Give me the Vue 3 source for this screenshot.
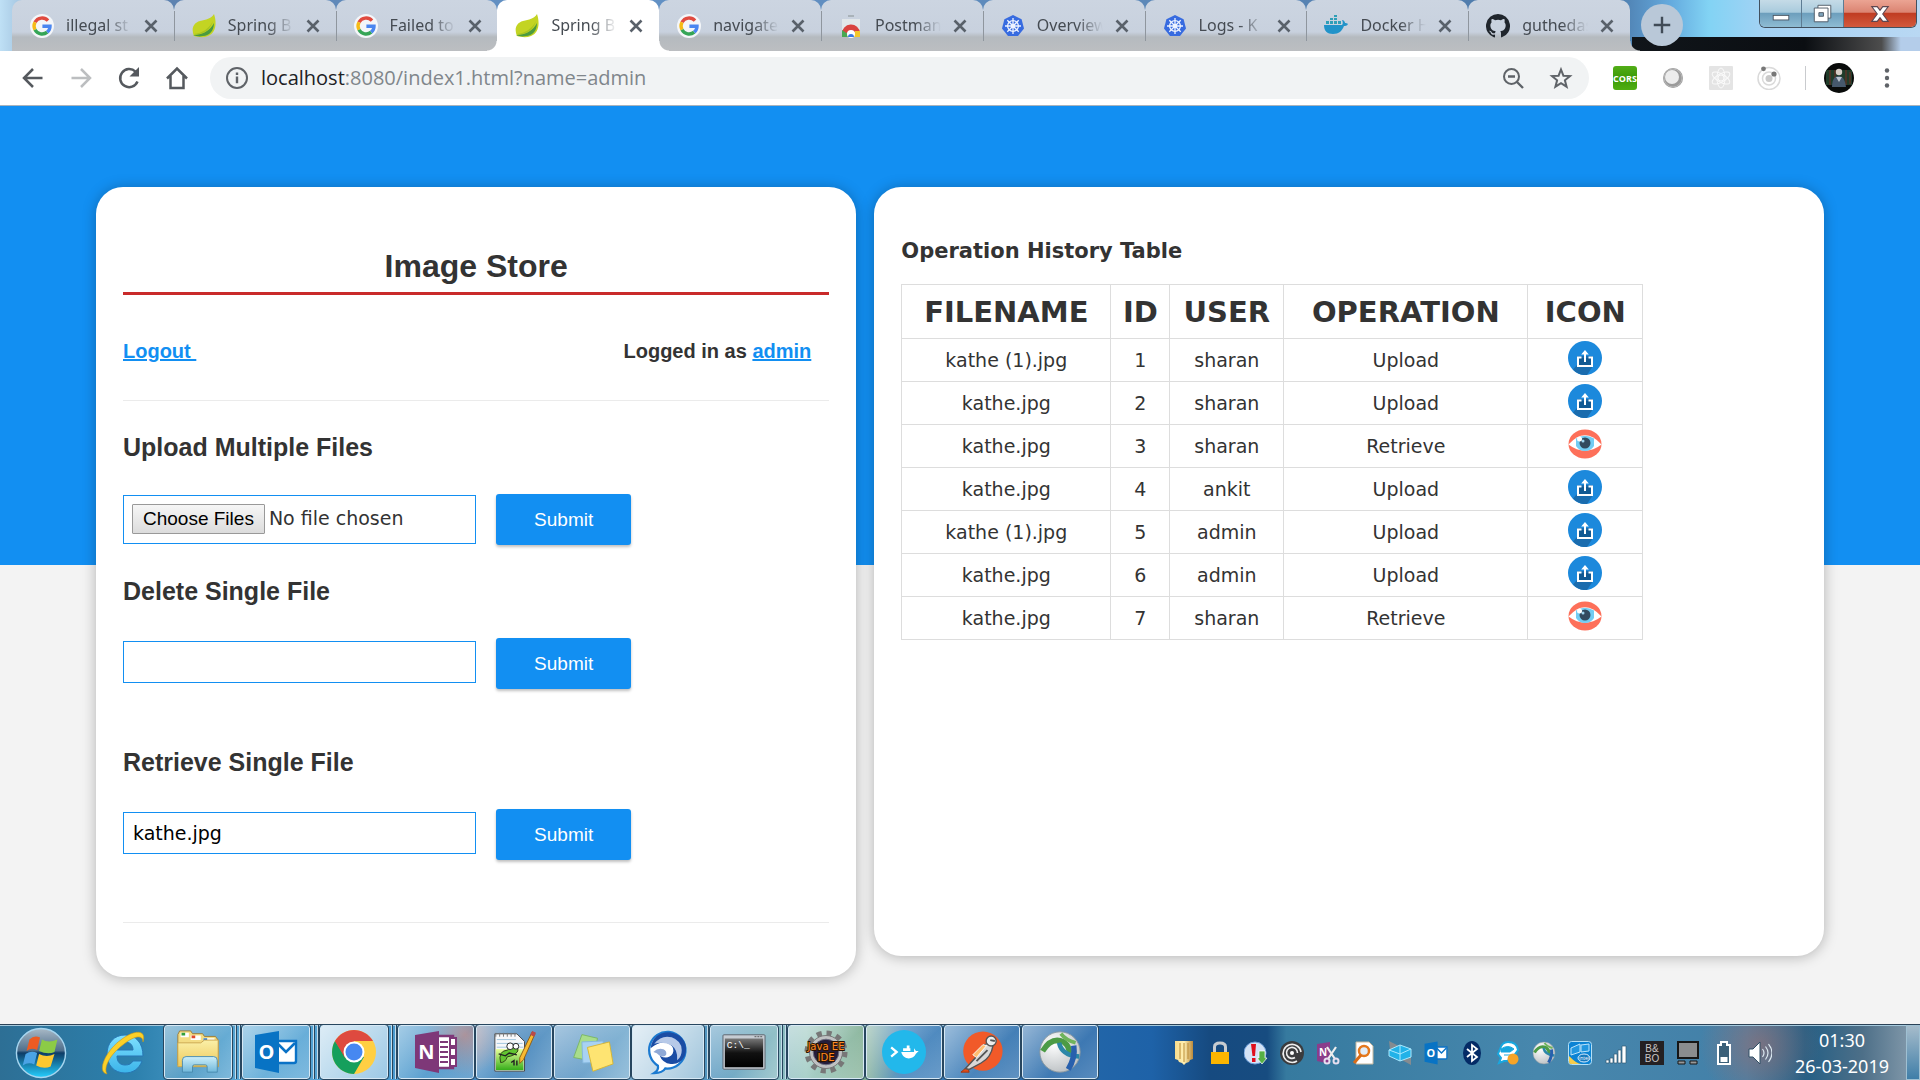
<script setup>
import { ref } from 'vue'

const tabs = [
  { icon: 'google', title: 'illegal st' },
  { icon: 'leaf', title: 'Spring B' },
  { icon: 'google', title: 'Failed to' },
  { icon: 'leaf', title: 'Spring B', active: true },
  { icon: 'google', title: 'navigate' },
  { icon: 'webstore', title: 'Postman' },
  { icon: 'helm', title: 'Overview' },
  { icon: 'helm', title: 'Logs - K' },
  { icon: 'docker', title: 'Docker H' },
  { icon: 'github', title: 'guthedas' },
]

const navButtons = [
  { icon: 'back', label: 'Back' },
  { icon: 'forward', label: 'Forward' },
  { icon: 'reload', label: 'Reload' },
  { icon: 'home', label: 'Home' },
]

const extensions = [
  { icon: 'cors', label: 'CORS' },
  { icon: 'ring', label: 'Ring' },
  { icon: 'atom', label: 'React tools' },
  { icon: 'orbit', label: 'Orbit' },
]

const history = [
  { id: 1, file: 'kathe (1).jpg', user: 'sharan', op: 'Upload' },
  { id: 2, file: 'kathe.jpg', user: 'sharan', op: 'Upload' },
  { id: 3, file: 'kathe.jpg', user: 'sharan', op: 'Retrieve' },
  { id: 4, file: 'kathe.jpg', user: 'ankit', op: 'Upload' },
  { id: 5, file: 'kathe (1).jpg', user: 'admin', op: 'Upload' },
  { id: 6, file: 'kathe.jpg', user: 'admin', op: 'Upload' },
  { id: 7, file: 'kathe.jpg', user: 'sharan', op: 'Retrieve' },
]

const apps = [
  { icon: 'folder', label: 'Explorer', stack: 2 },
  { icon: 'outlook', label: 'Outlook', stack: 2 },
  { icon: 'chrome', label: 'Chrome', stack: 2, lit: true },
  { icon: 'onenote', label: 'OneNote' },
  { icon: 'notepad', label: 'Notepad++' },
  { icon: 'sticky', label: 'Sticky Notes' },
  { icon: 'jabber', label: 'Jabber', stack: 1, lit: true },
  { icon: 'cmd', label: 'Command Prompt', stack: 2 },
  { icon: 'eclipse', label: 'Eclipse' },
  { icon: 'kitematic', label: 'Docker' },
  { icon: 'postman', label: 'Postman' },
  { icon: 'anyconnect', label: 'AnyConnect' },
]

const tray = [
  'shield', 'lock', 'alert', 'spiral', 'clipper', 'search-doc', 'cube', 'outlook', 'bluetooth',
  'chat', 'anyconnect', 'intel', 'signal', 'bando', 'display', 'battery', 'speaker',
]

const deleteName = ref('')
const retrieveName = ref('kathe.jpg')
</script>

<template>
  <div class="screen">
    <svg class="sprite" aria-hidden="true">
      <defs>
        <linearGradient id="g-orb" x1="0" y1="0" x2="0" y2="1"><stop offset="0" stop-color="#a9b9c6" /><stop offset=".45" stop-color="#4f6f8c" /><stop offset=".5" stop-color="#0d3c66" /><stop offset="1" stop-color="#25d0ff" /></linearGradient>
        <linearGradient id="g-ie" x1="0" y1="0" x2="0" y2="1"><stop offset="0" stop-color="#7fe0ff" /><stop offset="1" stop-color="#3bb4ea" /></linearGradient>
        <linearGradient id="g-folder" x1="0" y1="0" x2="0" y2="1"><stop offset="0" stop-color="#fbf0a8" /><stop offset="1" stop-color="#edc95b" /></linearGradient>
        <linearGradient id="g-glass" x1="0" y1="0" x2="0" y2="1"><stop offset="0" stop-color="#cdeffa" /><stop offset="1" stop-color="#6fb7da" /></linearGradient>
        <linearGradient id="g-cmd" x1="0" y1="0" x2="0" y2="1"><stop offset="0" stop-color="#777" /><stop offset=".5" stop-color="#111" /><stop offset="1" stop-color="#000" /></linearGradient>
        <linearGradient id="g-green" x1="0" y1="0" x2="0" y2="1"><stop offset="0" stop-color="#e9ff9a" /><stop offset="1" stop-color="#35ad1a" /></linearGradient>
        <linearGradient id="g-cors" x1="0" y1="0" x2="0" y2="1"><stop offset="0" stop-color="#52ad18" /><stop offset=".5" stop-color="#3b9a07" /><stop offset="1" stop-color="#4fae12" /></linearGradient>
        <linearGradient id="g-gold" x1="0" y1="0" x2="1" y2="0"><stop offset="0" stop-color="#f8dc8c" /><stop offset=".5" stop-color="#fff0b4" /><stop offset="1" stop-color="#b9893b" /></linearGradient>
        <radialGradient id="g-ball" cx=".35" cy=".3" r=".8"><stop offset="0" stop-color="#fff" /><stop offset="1" stop-color="#b8bdc0" /></radialGradient>
      </defs>

      <symbol id="google" viewBox="0 0 24 24">
        <circle cx="12" cy="12" r="12" fill="#f4f6f9" />
        <g fill="none" stroke-width="3.4">
          <path d="M18 6.6A8 8 0 0 0 5 8.3" stroke="#e04a3f" />
          <path d="M5 8.3a8 8 0 0 0 0 7.4" stroke="#f6bb16" />
          <path d="M5 15.7a8 8 0 0 0 12.2 2.4" stroke="#35a556" />
          <path d="M17.2 18.1A7.5 7.5 0 0 0 20 12.2h-7.6" stroke="#4a86f0" />
        </g>
      </symbol>
      <symbol id="leaf" viewBox="0 0 24 24">
        <path d="M22 0c3 9 2 19-6 22-5 2-10 1-14 0C-1 15 1 9 8 7c6-1.600 11-2 14-7z" fill="#c3d423" />
        <path d="M1 21c9 0 17-4 21-12 0 8-5 13-11 13-4 1-7 0-10-1z" fill="#4b9b3f" />
        <path d="M2 20c8-1 15-5 19-13-3 9-9 14-19 13z" fill="#a9c51f" />
      </symbol>
      <symbol id="webstore" viewBox="0 0 24 24">
        <path d="M9 1h6v2H9zM3 5h18v18H3z" fill="#e2e7ea" /><path d="M9 1h6v2H9z" fill="#a9b2b9" />
        <path d="M3 20a9 9 0 0 1 18-1l-9-1z" fill="#d9433f" />
        <path d="M3 23v-7l6 4 1 3z" fill="#48a852" /><path d="M14 23l2-6h5v6z" fill="#f4c72c" />
        <circle cx="12" cy="20" r="4" fill="#fff" /><path d="M9 23a3 3 0 1 1 6 0z" fill="#3b78e7" />
      </symbol>
      <symbol id="helm" viewBox="0 0 24 24">
        <path d="M12 1l8.600 4.200L23 14.500 17 22H7L1 14.500l2.400-9.300z" fill="#376be0" />
        <g fill="none" stroke="#eef3ff" stroke-width="1.300"><circle cx="12" cy="12" r="5.400" /><circle cx="12" cy="12" r="1.500" />
          <path d="M12 4v16M4 12h16M6.300 6.300l11.400 11.400M17.700 6.300L6.300 17.700" /></g>
      </symbol>
      <symbol id="docker" viewBox="0 0 24 24">
        <path d="M0 11h18c1-1 1-3 0-5 2 0 3 2 3 3 1 0 2 0 3 1-1 2-3 2-4 2-2 5-5 8-11 8-6 0-9-3-9-9z" fill="#2193c9" />
        <path d="M2 7h3v3H2zM6 7h3v3H6zM10 7h3v3h-3zM14 7h3v3h-3zM6 4h3v2H6zM10 4h3v2h-3zM10 1h3v2h-3z" fill="#2f9fb8" />
      </symbol>
      <symbol id="github" viewBox="0 0 16 16">
        <path fill="#20262d" d="M8 0a8 8 0 0 0-2.530 15.590c.4.070.55-.17.55-.38v-1.490C4 14.160 3.480 13.220 3.320 12.770c-.09-.23-.48-.94-.82-1.130-.28-.15-.68-.52-.01-.53.63-.01 1.080.58 1.230.82.72 1.210 1.870.87 2.330.66.070-.52.280-.87.510-1.070-1.780-.2-3.640-.89-3.640-3.950 0-.87.310-1.590.820-2.150-.08-.2-.36-1.020.080-2.120 0 0 .670-.21 2.200.82a7.400 7.400 0 0 1 4 0c1.530-1.040 2.200-.82 2.200-.82.440 1.100.160 1.920.080 2.120.510.560.820 1.270.820 2.150 0 3.070-1.870 3.750-3.650 3.950.290.250.540.730.540 1.480v2.200c0 .210.150.460.550.380A8 8 0 0 0 8 0z" />
      </symbol>
      <symbol id="close" viewBox="0 0 24 24"><path d="M6.500 6.500l11 11m0-11l-11 11" stroke="currentColor" stroke-width="2.600" /></symbol>
      <symbol id="plus" viewBox="0 0 24 24"><path d="M12 3v18M3 12h18" stroke="currentColor" stroke-width="2.600" /></symbol>

      <symbol id="back" viewBox="0 0 24 24"><path d="M21.500 12H4M12 3l-9 9 9 9" fill="none" stroke="#55595e" stroke-width="2.500" /></symbol>
      <symbol id="forward" viewBox="0 0 24 24"><path d="M2.500 12H20M12 3l9 9-9 9" fill="none" stroke="#bcbec0" stroke-width="2.500" /></symbol>
      <symbol id="reload" viewBox="0 0 24 24"><path d="M20.500 15.500A9 9 0 1 1 18.500 5.700" fill="none" stroke="#55595e" stroke-width="2.500" /><path d="M22 1v9.500h-9.500z" fill="#55595e" /></symbol>
      <symbol id="home" viewBox="0 0 24 24"><path d="M2 12.500L12 2.500l10 10M5.500 10v12h13V10" fill="none" stroke="#55595e" stroke-width="2.500" /></symbol>
      <symbol id="info" viewBox="0 0 24 24"><circle cx="12" cy="12" r="10" fill="none" stroke="#5f6368" stroke-width="2" /><path d="M10.800 10.500h2.400v6.800h-2.400zM10.800 6.500h2.400v2.400h-2.400z" fill="#5f6368" /></symbol>
      <symbol id="zoomout" viewBox="0 0 24 24"><circle cx="10.500" cy="10.500" r="7.500" fill="none" stroke="#5f6368" stroke-width="2" /><path d="M7 10.500h7M16 16l6 6" stroke="#5f6368" stroke-width="2.400" /></symbol>
      <symbol id="star" viewBox="0 0 24 24"><path d="M12 3.500l2.400 6.200 6.600.4-5.100 4.200 1.700 6.400L12 17.100l-5.600 3.600 1.700-6.400L3 10.100l6.600-.4z" fill="none" stroke="#5f6368" stroke-width="2" /></symbol>
      <symbol id="cors" viewBox="0 0 24 24"><rect width="24" height="24" rx="3" fill="url(#g-cors)" /><text x="12" y="16" text-anchor="middle" font-family="Open Sans, sans-serif" font-size="9" font-weight="700" fill="#fff">CORS</text></symbol>
      <symbol id="ring" viewBox="0 0 24 24"><circle cx="12" cy="12" r="10" fill="#9b9b9b" /><circle cx="11" cy="11" r="7" fill="#ececec" /><circle cx="12" cy="12" r="9" fill="none" stroke="#b9b9b9" /></symbol>
      <symbol id="atom" viewBox="0 0 24 24"><rect width="24" height="24" rx="1" fill="#e4e4e4" /><g fill="none" stroke="#fafafa" stroke-width="1"><circle cx="12" cy="12" r="3" /><ellipse cx="12" cy="12" rx="4" ry="10" /><ellipse cx="12" cy="12" rx="4" ry="10" transform="rotate(60 12 12)" /><ellipse cx="12" cy="12" rx="4" ry="10" transform="rotate(120 12 12)" /></g></symbol>
      <symbol id="orbit" viewBox="0 0 24 24"><g fill="none" stroke="#dadada" stroke-width="1.500"><circle cx="12" cy="12.500" r="11" /><circle cx="12" cy="12.500" r="6.500" /></g><circle cx="12" cy="12.500" r="3.500" fill="#c9c9c9" /><circle cx="6.500" cy="2.800" r="2.400" fill="#777" /><circle cx="17" cy="8" r="2.600" fill="#777" /></symbol>
      <symbol id="avatar" viewBox="0 0 30 30"><circle cx="15" cy="15" r="15" fill="#090b0a" /><path d="M2 7h26v15H2z" fill="#203c2a" /><path d="M6 7v15M11 7v15M22 7v15M26 9v12" stroke="#4a3426" stroke-width="2" /><circle cx="15" cy="9" r="3.200" fill="#d5cdc5" /><path d="M8 24c0-8 3-11 7-11s6 4 7 11z" fill="#46586c" /><path d="M12 14l3 5 3-5" fill="#b9c2cc" /></symbol>
      <symbol id="dots" viewBox="0 0 24 24"><g fill="#5f6368"><circle cx="12" cy="4.500" r="2.200" /><circle cx="12" cy="12" r="2.200" /><circle cx="12" cy="19.500" r="2.200" /></g></symbol>
      <symbol id="win-min" viewBox="0 0 24 24"><rect x="3.500" y="13.500" width="17" height="5" fill="#fff" stroke="#4b5663" /></symbol>
      <symbol id="win-max" viewBox="0 0 24 24"><path d="M6.500 2.500h14v14h-14z" fill="#fff" stroke="#4b5663" /><path d="M2.500 5.500h15v15h-15z" fill="#fff" stroke="#4b5663" /><path d="M7.500 10.500h5v4h-5z" fill="#7fa5bd" stroke="#4b5663" /></symbol>
      <symbol id="win-close" viewBox="0 0 24 24"><path d="M3 4h6l3 4 3-4h6l-6 8 6 8h-6l-3-4-3 4H3l6-8z" fill="#fff" stroke="#5d4650" stroke-width="1.200" /></symbol>

      <symbol id="upload" viewBox="0 0 34 34">
        <circle cx="17" cy="17" r="17" fill="#1c89dc" />
        <path d="M9 15v9l-4 4.500A17 17 0 0 0 19 34l6-9V15z" fill="#1a6cae" />
        <path d="M11 17h12v7H11z" fill="#125a93" />
        <path d="M13.500 16.500H10V25h14v-8.500h-3.500" fill="none" stroke="#fff" stroke-width="2" />
        <path d="M17 21v-9" stroke="#fff" stroke-width="2" /><path d="M17 9l3.800 4.500h-7.600z" fill="#fff" />
      </symbol>
      <symbol id="eye" viewBox="0 0 34 34">
        <ellipse cx="17" cy="17" rx="16.500" ry="14.500" fill="#fd705a" />
        <path d="M.5 17.500Q17-1 33.500 17.500 17 30 .5 17.500z" fill="#fff" />
        <path d="M8 11.500Q17 6 26 11.500V19q-3 5-9 5t-9-5z" fill="#73cdf3" />
        <circle cx="17" cy="16" r="5.500" fill="#324a5e" /><circle cx="15" cy="14" r="1.500" fill="#9ed4ee" /><circle cx="11.500" cy="12" r="2.500" fill="#fff" />
      </symbol>

      <symbol id="orb" viewBox="0 0 54 54">
        <circle cx="27" cy="27" r="25.500" fill="url(#g-orb)" stroke="#a6d5ef" stroke-width="1.500" />
        <path d="M15 13q5-5 11-2l-3 13q-6-3-11 1z" fill="#ec5b22" /><path d="M28 13q7 4 16 0l-3 13q-7 3-16-1z" fill="#8ccb46" />
        <path d="M11 28q6-4 12-1l-3 12q-6-3-12 1z" fill="#4aa3e5" /><path d="M25 28q8 4 16 0l-4 13q-7 3-15-1z" fill="#fdc830" />
      </symbol>
      <symbol id="ie" viewBox="0 0 46 46">
        <path d="M43 26H17c0 6 3 9 8 9 4 0 6-1 8-4h9c-3 8-9 12-17 12C14 43 7 35 7 24S14 5 25 5s18 8 18 21zM17 20h16c0-5-3-8-8-8s-8 3-8 8z" fill="url(#g-ie)" stroke="#2877b5" />
        <path d="M7 44C-4 42 6 20 22 9 34 0 47-1 43 12c0-8-9-6-19 2C10 24 3 38 7 44z" fill="#fbd028" stroke="#c99716" stroke-width=".6" />
      </symbol>
      <symbol id="folder" viewBox="0 0 48 48">
        <path d="M2 38V5l2-4h12l2 3h11l2 3h12l3 4v29z" fill="#f3dc83" stroke="#9d7a33" /><path d="M5 3h9v5H5zM16 6h11v5H16zM30 9h12v4H30z" fill="#fff" />
        <path d="M6 3h4v3H6z" fill="#33a03c" /><path d="M17 6h4v3h-4z" fill="#de4a2d" /><path d="M30 9h4v3h-4z" fill="#2e7bd1" />
        <path d="M2 14h25l4-3h15v29H2z" fill="url(#g-folder)" stroke="#c9a54f" />
        <path d="M7 46V33q0-4 4-4h30q4 0 4 4v13H34v-6q0-2-2-2H20q-2 0-2 2v6z" fill="url(#g-glass)" stroke="#4789ad" />
      </symbol>
      <symbol id="outlook" viewBox="0 0 44 44">
        <path d="M22 11h20v20q0 2-2 2H22z" fill="#fff" stroke="#0a72c6" stroke-width="2.400" /><path d="M23 13l9 9 9-9" fill="none" stroke="#0a72c6" stroke-width="2.600" />
        <path d="M1 5l24-4v42L1 38z" fill="#0873c4" /><text x="12.500" y="29" text-anchor="middle" font-family="Open Sans, sans-serif" font-size="20" font-weight="700" fill="#fff">O</text>
      </symbol>
      <symbol id="chrome" viewBox="0 0 44 44">
        <circle cx="22" cy="22" r="22" fill="#ffcf43" /><path d="M3 11a22 22 0 0 1 38 0H22L12 28z" fill="#de4a3f" /><path d="M3 11a22 22 0 0 0 19 33l10-17H13z" fill="#159f5c" /><path d="M3 11l10 17 9-17z" fill="#de4a3f" />
        <circle cx="22" cy="22" r="10.500" fill="#fff" /><circle cx="22" cy="22" r="8.500" fill="#4688f1" />
      </symbol>
      <symbol id="onenote" viewBox="0 0 44 44">
        <path d="M23 6h16v32H23z" fill="#fff" stroke="#7e3878" stroke-width="2.400" /><path d="M26 12h8M26 17h8M26 22h8M26 27h8M26 32h8" stroke="#7e3878" stroke-width="2" /><path d="M36 8h6v8h-6zM36 18h6v8h-6zM36 28h6v8h-6z" fill="#fff" stroke="#7e3878" stroke-width="2" />
        <path d="M1 5l24-4v42L1 38z" fill="#7e3878" /><text x="12.500" y="29" text-anchor="middle" font-family="Open Sans, sans-serif" font-size="20" font-weight="700" fill="#fff">N</text>
      </symbol>
      <symbol id="notepad" viewBox="0 0 46 46">
        <path d="M3 4h23l8 8v31H3z" fill="#f7f8fa" stroke="#444" /><path d="M5 10h20M5 14h27M5 18h28" stroke="#9fc4dd" /><path d="M4 20h29v22H4z" fill="url(#g-green)" />
        <path d="M4 3v4M8 3v4M12 3v4M16 3v4M20 3v4M24 3v4" stroke="#777" />
        <path d="M9 34q-3-12 7-13l6-4q6-1 5 5-3 5-11 6-2 6-7 6z" fill="#62c431" stroke="#2c3f15" /><circle cx="19" cy="17" r="3.500" fill="#fff" stroke="#222" /><circle cx="25" cy="17" r="3" fill="#fff" stroke="#222" /><path d="M7 25l7 2 4-3 8 2M20 34l3-2v5M26 32v5" fill="none" stroke="#222" stroke-width="1.500" />
        <path d="M42 2l3 2-12 27-4 4 0-6z" fill="#f8ba32" stroke="#8d5d18" /><path d="M42 1l4 2-2 4-4-2z" fill="#b94a4a" />
      </symbol>
      <symbol id="sticky" viewBox="0 0 48 48">
        <path d="M13 5l17 4-5 25-21-4z" fill="#a8dd8b" stroke="#78b565" /><path d="M13 13l23-1 2 23-24 1z" fill="#a8d2f3" stroke="#82b6dd" /><path d="M19 19l24-6 4 24-22 8z" fill="#fee472" stroke="#d7b52f" />
      </symbol>
      <symbol id="jabber" viewBox="0 0 48 48">
        <path d="M25 2a20 20 0 1 1-4 40q-3 5-12 5 5-3 4-8A20 20 0 0 1 25 2z" fill="#fff" stroke="#1b7ad0" stroke-width="2.500" />
        <path d="M5 20C7 6 18 1 28 3 41 5 47 18 42 29q-5 9-15 8-9-1-12-9 9 5 14-2 3-7-4-11-9-4-20 5z" fill="#1a4ca4" />
        <path d="M9 15q8-10 19-7 11 4 11 14 0 7-5 11 1-11-6-16-8-5-19-2z" fill="#b7c9e8" />
        <path d="M8 24q5-5 11-3 4 2 3 6-2 3-7 1-3-3-7-4z" fill="#8fa9d6" />
      </symbol>
      <symbol id="cmd" viewBox="0 0 46 38"><rect x="1" y="1" width="44" height="36" rx="1" fill="#c6ccd3" stroke="#5b636c" /><path d="M34 3h8" stroke="#555" stroke-dasharray="2 1" /><path d="M3 5h40v30H3z" fill="url(#g-cmd)" /><text x="5" y="15" font-family="Liberation Mono, monospace" font-size="10" fill="#fff">C:\_</text></symbol>
      <symbol id="eclipse" viewBox="0 0 48 48">
        <circle cx="24" cy="24" r="20.500" fill="none" stroke="#777" stroke-width="6" stroke-dasharray="5.500 5.230" /><circle cx="24" cy="24" r="18" fill="#bfc1c2" stroke="#737373" /><circle cx="24" cy="24" r="14" fill="#241d3a" stroke="#6d6d80" />
        <g font-family="DejaVu Sans, sans-serif" font-size="11" fill="#ff8b25" stroke="#2b1200" stroke-width="2" paint-order="stroke" text-anchor="middle"><text x="24" y="22">Java EE</text><text x="24" y="34">IDE</text></g>
      </symbol>
      <symbol id="kitematic" viewBox="0 0 48 48"><circle cx="24" cy="24" r="24" fill="#22b8eb" /><path d="M10 19l6 5-6 5" fill="none" stroke="#fff" stroke-width="2.500" /><path d="M21 24h14v-4l2 3h3l-3 3c-3 7-14 7-16-2zM23 20h8v3h-8zM27 17h3v3h-3z" fill="#fff" /></symbol>
      <symbol id="postman" viewBox="0 0 48 48"><circle cx="25" cy="23" r="21.500" fill="#f15a29" /><path d="M1 46l7-6 2 6z" fill="#e14c1a" stroke="#9f3510" /><path d="M6 42L18 29q2-12 14-15l4 3q-2 13-13 19L10 43z" fill="#d9d8d8" stroke="#555" stroke-width="1.500" /><path d="M14 27l11-11 4 1-11 13z" fill="#ffbd70" stroke="#fff" /><circle cx="34" cy="12" r="5.500" fill="#eee" stroke="#555" stroke-width="1.500" /><path d="M33 11l5 1M18 34l12-12" stroke="#555" stroke-width="2" /></symbol>
      <symbol id="anyconnect" viewBox="0 0 48 48">
        <circle cx="24" cy="24" r="22" fill="url(#g-ball)" stroke="#87969e" />
        <g fill="none">
          <path d="M5 23Q15 7 28 13q7 5 6 13" stroke="#4c9b45" stroke-width="6" />
          <path d="M25 4q5 7 16 10" stroke="#6fb45c" stroke-width="4" />
          <path d="M23 14q3 14 22 15" stroke="#2b87a8" stroke-width="5" />
          <path d="M39 17q2 13-6 26" stroke="#2860ad" stroke-width="6" />
        </g>
      </symbol>

      <symbol id="shield" viewBox="0 0 24 24"><path d="M3 0h18v18l-3 1-1 2-3 1-2 2-2-2-3-1-1-2-3-1z" fill="url(#g-gold)" /><path d="M8 2v16M12 2v19M16 2v16" stroke="#b98a34" /></symbol>
      <symbol id="lock" viewBox="0 0 24 24"><path d="M6.500 11V6q0-4 5.500-4t5.500 4v5" fill="none" stroke="#c8ccd0" stroke-width="3" /><path d="M3 11h18v12H3z" fill="#fcb500" /></symbol>
      <symbol id="alert" viewBox="0 0 24 24"><circle cx="11" cy="12" r="11" fill="#d4e3f6" stroke="#6f9fda" /><path d="M7 3h5l-1 12H8.500zM8 17h3.500v4H8z" fill="#e00f1d" /><path d="M15 10h6v7h2l-5 6-5-6h2z" fill="#56b044" stroke="#fff" stroke-width=".7" /></symbol>
      <symbol id="spiral" viewBox="0 0 24 24"><circle cx="12" cy="12" r="12" fill="#3b3c3e" /><path d="M17 20a9 9 0 1 1 4-9M15 16.500a5.500 5.500 0 1 1 2.500-4.500" fill="none" stroke="#eee" stroke-width="1.600" /><circle cx="12" cy="12" r="2" fill="#fff" /></symbol>
      <symbol id="clipper" viewBox="0 0 24 24"><path d="M1 3l13-2v22L1 20z" fill="#8a3d8b" /><text x="7" y="15" text-anchor="middle" font-family="Open Sans, sans-serif" font-size="10" font-weight="700" fill="#fff">N</text><path d="M11 6l8 12M20 6l-8 12" stroke="#eee" stroke-width="2.200" /><g fill="none" stroke="#e8dff0" stroke-width="2"><circle cx="11" cy="20" r="2.500" /><circle cx="20" cy="20" r="2.500" /></g></symbol>
      <symbol id="search-doc" viewBox="0 0 24 24"><path d="M4 1h13l4 4v18H4z" fill="#fff" stroke="#c7b99f" /><circle cx="12" cy="10" r="5" fill="#e2eefa" stroke="#e5791e" stroke-width="2.500" /><path d="M9 14l-7 8" stroke="#d86c18" stroke-width="3" /></symbol>
      <symbol id="cube" viewBox="0 0 24 24"><path d="M1 0l10 5-9 4zM23 15v9l-9-5z" fill="#858b90" /><path d="M1 9l11-5 11 4v8l-11 4-11-5z" fill="#22b2e8" stroke="#a9e9ff" /><path d="M1 9l11 4 11-5M12 13v7M12 4v9" stroke="#a9e9ff" fill="none" /></symbol>
      <symbol id="bluetooth" viewBox="0 0 24 24"><ellipse cx="12" cy="12" rx="9" ry="12" fill="#042b66" /><path d="M7 8l10 8-5 4V4l5 4-10 8" fill="none" stroke="#fff" stroke-width="1.800" /></symbol>
      <symbol id="chat" viewBox="0 0 24 24"><path d="M12 1q9 0 10 8l-5 7q-3 4-9 4l-5 2 2-5-3-4 2-5q2-7 8-7z" fill="#fff" stroke="#18a7df" stroke-width="2" /><path d="M5 8q7-5 13 0l-4 3H5zM8 14h7" fill="#18a7df" stroke="#18a7df" /><circle cx="17" cy="18" r="5.500" fill="#f6a427" /></symbol>
      <symbol id="intel" viewBox="0 0 24 24"><rect x=".5" y=".5" width="23" height="23" rx="3" fill="#0b83d4" stroke="#b4dff5" /><path d="M3 7l9-4v8l-9 3zM13 4l8-1v7l-8 1z" fill="#2297df" stroke="#bde4fa" /><path d="M1 15q9 9 13 8H3q-2 0-2-3z" fill="#f5cc4b" /><ellipse cx="16" cy="17" rx="6" ry="4" fill="#1679bd" stroke="#def" /><text x="16" y="19" text-anchor="middle" font-family="Open Sans, sans-serif" font-size="5" fill="#fff">intel</text></symbol>
      <symbol id="signal" viewBox="0 0 24 24"><path d="M2 19h3v3H2zM6 17h3v5H6zM10 13h3v9h-3zM14 9h3v13h-3zM18 5h4v17h-4z" fill="#fff" stroke="#325a74" stroke-width=".7" /></symbol>
      <symbol id="bando" viewBox="0 0 24 24"><rect width="24" height="24" fill="#242022" /><g font-family="Liberation Sans, sans-serif" font-size="10" fill="#c9c5c5" text-anchor="middle"><text x="12" y="11">B&amp;</text><text x="12" y="21">BO</text></g></symbol>
      <symbol id="display" viewBox="0 0 24 24"><path d="M2 1h20v16H2z" fill="#8a8c8e" stroke="#161616" stroke-width="2" /><path d="M2 20h7v3H2zM14 20h7v3h-7z" fill="#989898" stroke="#161616" /></symbol>
      <symbol id="battery" viewBox="0 0 24 24"><path d="M9 1h6v3h3v19H6V4h3z" fill="#3b6079" stroke="#fff" stroke-width="2" /><path d="M8.500 16h7v5h-7z" fill="#fff" /></symbol>
      <symbol id="speaker" viewBox="0 0 24 24"><path d="M1 8h4l7-7v22l-7-7H1z" fill="#fff" stroke="#315066" /><path d="M14.500 8q3 4 0 8M17.500 5.500q5 6.500 0 13M20.500 3q7 9 0 18" fill="none" stroke="#dbe9f1" stroke-width="1.200" /></symbol>
    </svg>

    <header class="browser">
      <div class="strip">
        <nav class="tabs" aria-label="Tabs">
          <div v-for="(tab, i) in tabs" :key="i" class="tab" :class="{ active: tab.active }">
            <svg class="favicon"><use :href="'#' + tab.icon" /></svg>
            <span class="tab-title">{{ tab.title }}</span>
            <button class="tab-close" type="button" aria-label="Close tab"><svg><use href="#close" /></svg></button>
          </div>
        </nav>
        <button class="new-tab" type="button" aria-label="New tab"><svg><use href="#plus" /></svg></button>
        <div class="window-controls">
          <button type="button" aria-label="Minimize"><svg><use href="#win-min" /></svg></button>
          <button type="button" aria-label="Restore"><svg><use href="#win-max" /></svg></button>
          <button type="button" class="quit" aria-label="Close"><svg><use href="#win-close" /></svg></button>
        </div>
      </div>
      <div class="toolbar">
        <button v-for="b in navButtons" :key="b.icon" class="tool" type="button" :aria-label="b.label">
          <svg><use :href="'#' + b.icon" /></svg>
        </button>
        <div class="omnibox">
          <svg class="info"><use href="#info" /></svg>
          <span class="address">localhost<span class="path">:8080/index1.html?name=admin</span></span>
          <button class="tool" type="button" aria-label="Zoom"><svg><use href="#zoomout" /></svg></button>
          <button class="tool" type="button" aria-label="Bookmark"><svg><use href="#star" /></svg></button>
        </div>
        <button v-for="e in extensions" :key="e.icon" class="tool" type="button" :aria-label="e.label">
          <svg><use :href="'#' + e.icon" /></svg>
        </button>
        <span class="divider"></span>
        <button class="tool profile" type="button" aria-label="Profile"><svg><use href="#avatar" /></svg></button>
        <button class="tool" type="button" aria-label="Menu"><svg><use href="#dots" /></svg></button>
      </div>
    </header>

    <main class="page">
      <section class="card store">
        <h1>Image Store</h1>
        <div class="session">
          <a href="#logout">Logout&nbsp;</a>
          <span>Logged in as <a href="#admin">admin</a></span>
        </div>
        <hr />
        <form @submit.prevent>
          <h2><label for="upload-files">Upload Multiple Files</label></h2>
          <div class="row">
            <input id="upload-files" type="file" multiple />
            <button class="submit" type="submit">Submit</button>
          </div>
        </form>
        <form @submit.prevent>
          <h2><label for="delete-file">Delete Single File</label></h2>
          <div class="row">
            <input id="delete-file" v-model="deleteName" type="text" />
            <button class="submit" type="submit">Submit</button>
          </div>
        </form>
        <form class="spaced" @submit.prevent>
          <h2><label for="retrieve-file">Retrieve Single File</label></h2>
          <div class="row">
            <input id="retrieve-file" v-model="retrieveName" type="text" />
            <button class="submit" type="submit">Submit</button>
          </div>
        </form>
        <hr class="last" />
      </section>

      <section class="card history">
        <h3>Operation History Table</h3>
        <table>
          <colgroup>
            <col class="c-file" /><col class="c-id" /><col class="c-user" /><col class="c-op" /><col class="c-icon" />
          </colgroup>
          <thead>
            <tr><th>FILENAME</th><th>ID</th><th>USER</th><th>OPERATION</th><th>ICON</th></tr>
          </thead>
          <tbody>
            <tr v-for="row in history" :key="row.id">
              <td>{{ row.file }}</td>
              <td>{{ row.id }}</td>
              <td>{{ row.user }}</td>
              <td>{{ row.op }}</td>
              <td class="op-icon"><svg><use :href="row.op === 'Upload' ? '#upload' : '#eye'" /></svg></td>
            </tr>
          </tbody>
        </table>
      </section>
    </main>

    <footer class="taskbar">
      <button class="launcher" type="button" aria-label="Start"><svg class="orb"><use href="#orb" /></svg></button>
      <button class="launcher" type="button" aria-label="Internet Explorer"><svg class="ie"><use href="#ie" /></svg></button>
      <div v-for="app in apps" :key="app.icon" class="app">
        <button type="button" :class="{ lit: app.lit }" :aria-label="app.label"><svg><use :href="'#' + app.icon" /></svg></button>
        <span v-for="n in app.stack || 0" :key="n" class="edge"></span>
      </div>
      <div class="tray">
        <svg v-for="t in tray" :key="t"><use :href="'#' + t" /></svg>
      </div>
      <div class="clock"><span>01:30</span><span>26-03-2019</span></div>
      <button class="show-desktop" type="button" aria-label="Show desktop"></button>
    </footer>
  </div>
</template>

<style>
body {
  margin: 0;
}
</style>

<style scoped>
* {
  box-sizing: border-box;
}
button {
  border: 0;
  padding: 0;
  background: none;
  display: flex;
  align-items: center;
  justify-content: center;
}
.screen {
  min-height: 100vh;
  display: flex;
  flex-direction: column;
  color: #333;
  background: #f3f3f3;
}
.sprite {
  position: absolute;
  width: 0;
  height: 0;
  visibility: hidden;
}

/* browser chrome */
.browser {
  background: #fff;
  border-bottom: 1px solid #a9b3bd;
}
.strip {
  display: flex;
  height: 51px;
  padding-left: 12px;
  background:
    linear-gradient(90deg, transparent 85%, #10151a 85%, #0b0e12 94%, #4d4d4d 98%, #b4cdea 99%) bottom / 100% 14px no-repeat,
    linear-gradient(90deg, #bfe0f5, #5c7fab 4%, #6392c6 30%, #5c88b8 60%, #4b78a8 84%, #64aade 87%, #82d3f4 89%, #a5d2f4 92%, #b9d8f3);
}
.tabs {
  flex: 0 1 1618px;
  display: flex;
  min-width: 0;
}
.tab {
  position: relative;
  flex: 1 1 0;
  min-width: 0;
  display: flex;
  align-items: center;
  padding-left: 18px;
  border-radius: 10px 10px 0 0;
  background: linear-gradient(#ccd5e1, #c8d1de 32px, #b5babf 37px, #bcbec1);
  color: #454b52;
  font: 16px/24px "Noto Sans", sans-serif;
}
.tab + .tab:not(.active)::before {
  content: "";
  position: absolute;
  left: 0;
  top: 11px;
  width: 1px;
  height: 30px;
  background: #8f969e;
}
.tab.active + .tab::before {
  display: none;
}
.tab.active {
  background: #fff;
  z-index: 1;
}
.tab.active::before,
.tab.active::after,
.tab:last-child::after {
  content: "";
  position: absolute;
  bottom: 0;
  width: 10px;
  height: 10px;
}
.tab.active::before {
  left: -10px;
  background: radial-gradient(circle at 0 0, transparent 9px, #fff 10px);
}
.tab.active::after {
  right: -10px;
  background: radial-gradient(circle at 100% 0, transparent 9px, #fff 10px);
}
.tab:last-child::after {
  right: -10px;
  background: radial-gradient(circle at 100% 0, transparent 9px, #bcbec1 10px);
}
.favicon {
  flex: none;
  width: 24px;
  height: 24px;
}
.tab-title {
  width: 66px;
  margin-left: 12px;
  padding-bottom: 2px;
  overflow: hidden;
  white-space: nowrap;
  mask-image: linear-gradient(90deg, #000 60%, transparent);
}
.tab-close {
  flex: none;
  margin-left: 7px;
  color: #59616a;
}
.tab-close svg {
  width: 24px;
  height: 24px;
}
.new-tab {
  width: 42px;
  height: 42px;
  margin: 4px 0 0 11px;
  border-radius: 50%;
  background: #b9c8d8;
  color: #404b57;
}
.new-tab svg {
  width: 22px;
  height: 22px;
}
.window-controls {
  display: flex;
  height: 28px;
  margin: 0 3px 0 auto;
  border: 1px solid #42505e;
  border-top: 0;
  border-radius: 0 0 6px 6px;
  overflow: hidden;
}
.window-controls button {
  width: 42px;
  border-right: 1px solid #5d7c93;
  background: linear-gradient(#c5dbe7, #a9cbdd 45%, #6d9fbd 50%, #8fbcd3);
}
.window-controls button.quit {
  width: 72px;
  border-right: 0;
  background: linear-gradient(#eba493, #db8472 45%, #c03c22 50%, #d3593c);
}
.window-controls svg {
  width: 22px;
  height: 22px;
}
.toolbar {
  display: flex;
  align-items: center;
  height: 54px;
  padding: 0 9px;
}
.tool {
  flex: none;
  width: 48px;
  height: 42px;
}
.tool svg {
  width: 24px;
  height: 24px;
}
.tool.profile svg {
  width: 30px;
  height: 30px;
}
.omnibox {
  flex: 1;
  min-width: 0;
  display: flex;
  align-items: center;
  height: 42px;
  margin: 0 12px 0 9px;
  padding: 0 4px 0 15px;
  border-radius: 21px;
  background: #f1f3f4;
}
.info {
  flex: none;
  width: 24px;
  height: 24px;
}
.address {
  flex: 1;
  margin-left: 12px;
  color: #202124;
  font: 20px/28px "Open Sans", sans-serif;
  white-space: nowrap;
}
.path {
  color: #80868b;
}
.divider {
  width: 1px;
  height: 24px;
  margin: 0 9px 0 12px;
  background: #c9cbce;
}

/* page */
.page {
  flex: 1;
  display: flex;
  align-items: flex-start;
  gap: 18px;
  padding: 81px 5% 47px;
  background: linear-gradient(#128ff2 459px, #f3f3f3 459px);
  font-family: "Liberation Sans", Arial, sans-serif;
}
.card {
  padding: 0 27px;
  border-radius: 27px;
  background: #fff;
  box-shadow: 0 1px 14px rgba(0, 0, 0, 0.27);
}
.store {
  flex: 0 0 44%;
  padding-top: 59px;
  padding-bottom: 54px;
}
h1 {
  margin: 0;
  padding-bottom: 6px;
  border-bottom: 3px solid #c92a2a;
  font-size: 32px;
  line-height: 40px;
  text-align: center;
}
.session {
  display: flex;
  justify-content: space-between;
  margin-top: 44px;
  padding-right: 18px;
  font-size: 20px;
  font-weight: 700;
  line-height: 24px;
}
a {
  color: #128ff2;
  text-decoration: underline 2px;
}
hr {
  height: 1px;
  margin: 37px 0 0;
  border: 0;
  background: #ebebeb;
}
hr.last {
  margin-top: 62px;
}
h2 {
  margin: 31px 0 32px;
  font-size: 25px;
  line-height: 30px;
}
.spaced h2 {
  margin-top: 58px;
}
.row {
  display: flex;
  align-items: center;
  gap: 20px;
}
input {
  width: 50%;
  height: 42px;
  padding: 0 9px;
  border: 1px solid #128ff2;
  border-radius: 0;
  outline: 0;
  background: #fff;
  color: #000;
  font: 19px/24px "DejaVu Sans", Verdana, sans-serif;
}
input[type="text"] {
  margin-bottom: 3px;
}
input[type="file"] {
  height: 49px;
  padding: 8px;
  color: #333;
}
input[type="file"]::file-selector-button {
  height: 30px;
  margin: 0 4px 0 0;
  padding: 0 10px;
  border: 1px solid #999;
  border-radius: 1px;
  background: linear-gradient(#f6f6f6, #dcdcdc);
  color: #000;
  font: 19px/24px "Liberation Sans", Arial, sans-serif;
}
.submit {
  width: 135px;
  height: 51px;
  border-radius: 3px;
  background: #128ff2;
  box-shadow: 0 2px 3px rgba(0, 0, 0, 0.25);
  color: #fff;
  font: 19px/24px "Liberation Sans", Arial, sans-serif;
}
.history {
  flex: 1;
  min-height: 769px;
  padding-top: 51px;
  font-family: "DejaVu Sans", Verdana, sans-serif;
}
h3 {
  margin: 0 0 20px;
  font-size: 21px;
  line-height: 26px;
}
table {
  width: 741px;
  max-width: 100%;
  table-layout: fixed;
  border-collapse: collapse;
  text-align: center;
}
.c-file { width: 209px; }
.c-id { width: 59px; }
.c-user { width: 114px; }
.c-op { width: 244px; }
.c-icon { width: 115px; }
th,
td {
  height: 43px;
  padding: 0;
  border: 1px solid #ddd;
  font-size: 19px;
  line-height: 24px;
}
th {
  height: 54px;
  padding-top: 1px;
  font-size: 29px;
  line-height: 32px;
}
td.op-icon {
  padding: 2px 0 6px;
}
.op-icon svg {
  display: block;
  width: 34px;
  height: 34px;
  margin: 0 auto;
}

/* taskbar */
.taskbar {
  display: flex;
  height: 56px;
  border-top: 1px solid #2b4257;
  box-shadow: inset 0 1px #a5c9dc;
  background:
    radial-gradient(ellipse 40px 40px at 465px 10px, rgba(200, 130, 120, 0.7), rgba(200, 130, 120, 0)),
    radial-gradient(ellipse 60px 60px at 1760px 20px, rgba(160, 110, 110, 0.6), rgba(160, 110, 110, 0)),
    linear-gradient(90deg, #2d6f95, #2c80ad 7%, #5aa8d6 13%, #4b9cd0 20%, #3c7fb8 27%, #77add0 33%, #4f93bd 37%, #9bc8c0 42%, #7fae92 45%, #3d80bb 47%, #2467a8 55%, #1e62a8 60%, #164a80 63%, #174c80 66%, #367a9f 67%, #4787ad 80%, #4380a8 91%, #245f85 94%, #4d6f88 97%, #8ca1b1);
}
.launcher {
  width: 82px;
}
.orb {
  width: 54px;
  height: 52px;
}
.ie {
  width: 46px;
  height: 46px;
}
.app {
  flex: 0 1 78px;
  display: flex;
  padding: 0 2px 1px 0;
}
.app button {
  flex: 1;
  min-width: 0;
  border: 1px solid #d6e8f4;
  border-radius: 3px;
  outline: 1px solid #27465f;
  outline-offset: 0;
  background: linear-gradient(135deg, rgba(255, 255, 255, 0.5), rgba(255, 255, 255, 0.12) 60%, rgba(255, 255, 255, 0.25));
}
.app button.lit {
  background: linear-gradient(135deg, rgba(255, 255, 255, 0.8), rgba(255, 255, 255, 0.45));
}
.app svg {
  width: 44px;
  height: 46px;
}
.edge {
  width: 4px;
  border-right: 1px solid #c4dcea;
  box-shadow: 1px 0 #27465f;
}
.tray {
  display: flex;
  align-items: center;
  margin-left: auto;
}
.tray svg {
  width: 24px;
  height: 24px;
  margin: 0 6px;
}
.clock {
  display: flex;
  flex-direction: column;
  justify-content: center;
  width: 128px;
  color: #fff;
  font: 18px/26px "Noto Sans", sans-serif;
  text-align: center;
}
.show-desktop {
  width: 14px;
  border: 1px solid #9fc0d2;
  background: linear-gradient(#a6bccb, #3f7ea8);
}
</style>
